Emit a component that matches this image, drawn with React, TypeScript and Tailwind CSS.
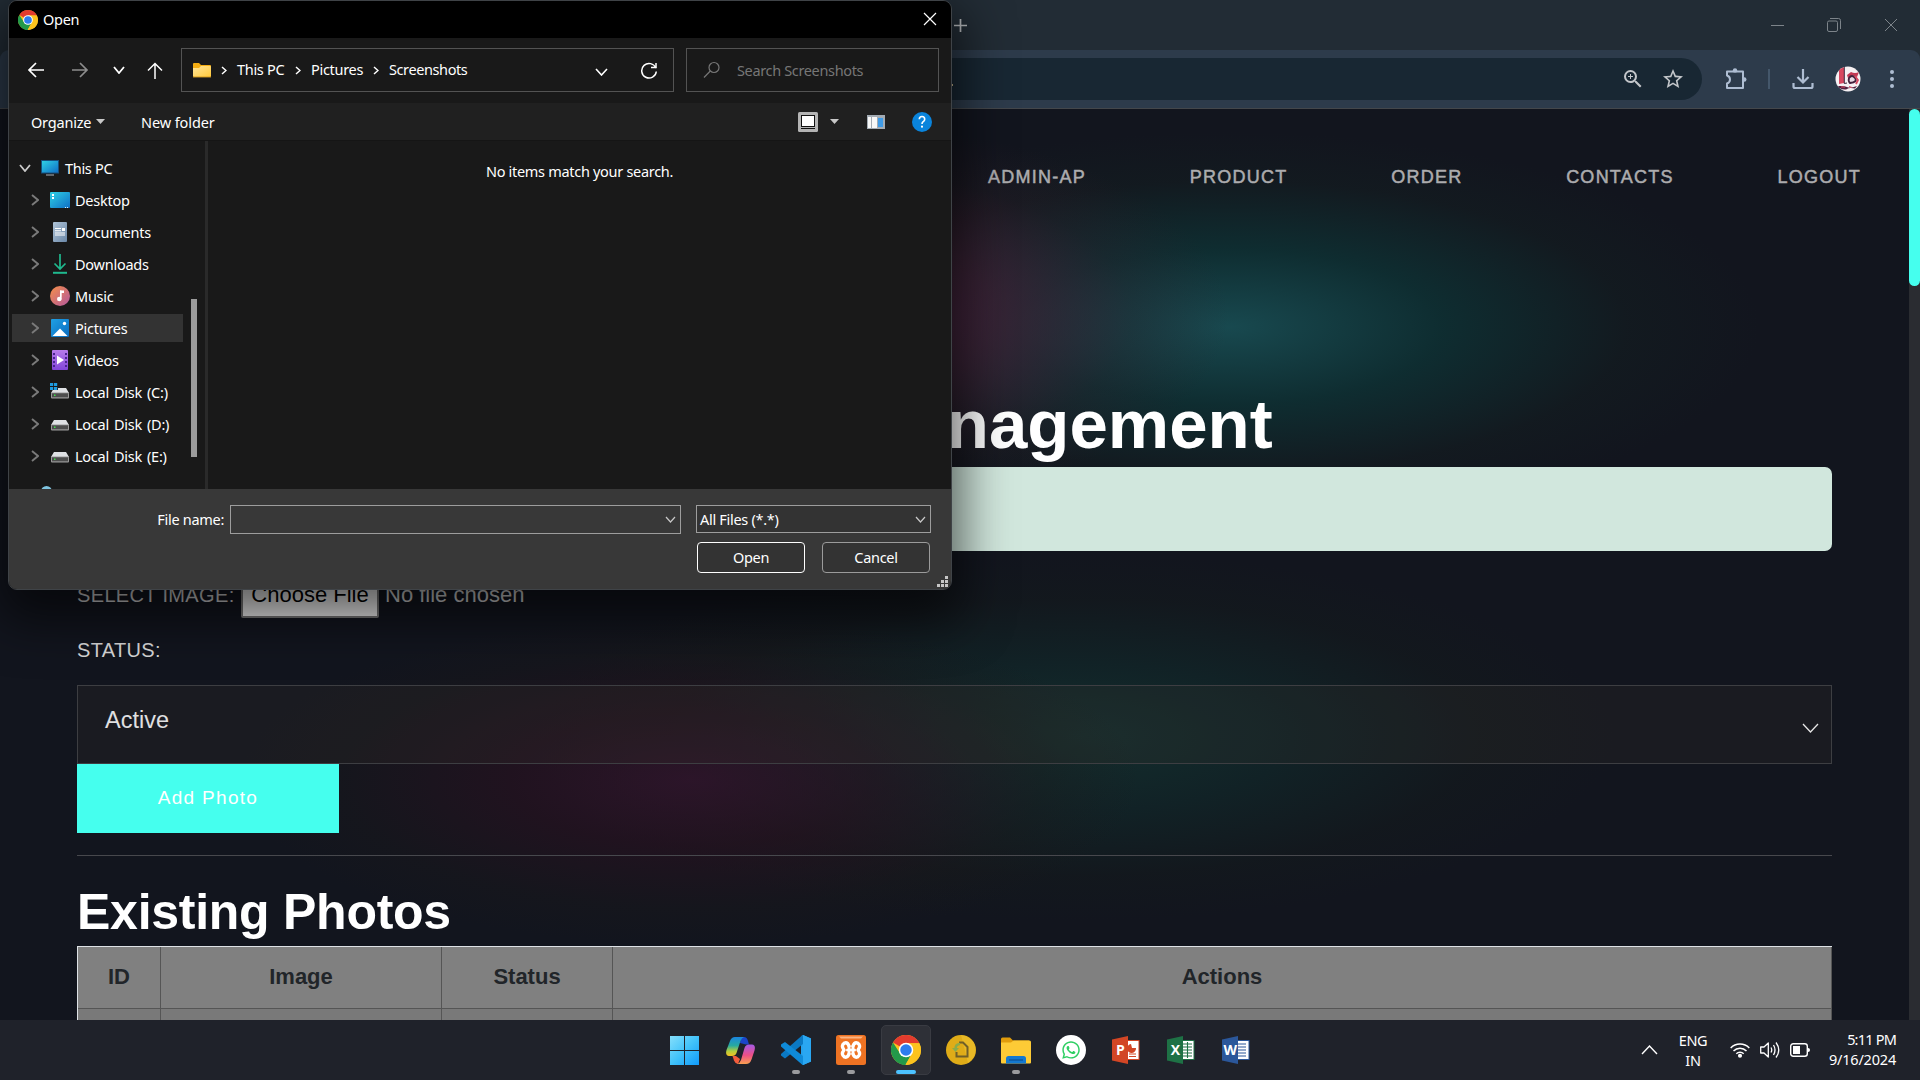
import React from 'react';
import { MdOutlineZoomIn, MdStarBorder } from 'react-icons/md';
import { FaWhatsapp } from 'react-icons/fa';

const ui = "font-['Noto_Sans','Open_Sans',sans-serif]";
const arial = "font-['Liberation_Sans',Arial,sans-serif]";

function ChromeLogo({ size }: { size: number }) {
  return (
    <svg width={size} height={size} viewBox="0 0 48 48" className="block shrink-0">
      <circle cx="24" cy="24" r="24" fill="#fcc31e" />
      <path d="M24 24 L3.2 12 A24 24 0 0 1 44.8 12 L45.3 13 H24 Z" fill="#e33b2e" />
      <path d="M3.2 12 L14.5 29.5 L24 34 L24 48 A24 24 0 0 1 3.2 12 Z" fill="#23994a" />
      <path d="M24 34 L33.500 29.500 L23 48 A24 24 0 0 1 17 46.900 Z" fill="#23994a" />
      <path d="M33.500 29.500 L23 48 A24 24 0 0 0 45.300 13 L24 13 L36 22Z" fill="#fcc31e" />
      <circle cx="24" cy="24" r="11.6" fill="#fff" />
      <circle cx="24" cy="24" r="9.2" fill="#2d7cee" />
    </svg>
  );
}

function Chevron({ w, h, color, stroke = 1.5, dir = 'down' }: { w: number; h: number; color: string; stroke?: number; dir?: 'down' | 'right' | 'up' }) {
  const d = dir === 'down' ? `M1 1 L${w / 2} ${h - 1} L${w - 1} 1` : dir === 'up' ? `M1 ${h - 1} L${w / 2} 1 L${w - 1} ${h - 1}` : `M1 1 L${w - 1} ${h / 2} L1 ${h - 1}`;
  return (
    <svg width={w} height={h} className="block shrink-0">
      <path d={d} fill="none" stroke={color} strokeWidth={stroke} />
    </svg>
  );
}

function FolderIcon() {
  return (
    <svg width="18" height="15" viewBox="0 0 18 15" className="block shrink-0">
      <defs>
        <linearGradient id="fold" x1="0" y1="0" x2="1" y2="1">
          <stop offset="0" stopColor="#ffe49a" />
          <stop offset="1" stopColor="#ffc93a" />
        </linearGradient>
      </defs>
      <path d="M0 1 Q0 0 1 0 H6 L8 2 H17 Q18 2 18 3 V8 H0Z" fill="#f5ad12" />
      <path d="M0 5 H6 L8 3 H17 Q18 3 18 4 V13 Q18 14 17 14 H1 Q0 14 0 13Z" fill="url(#fold)" />
      <rect x="0" y="13.4" width="18" height="1" fill="#e0a523" />
    </svg>
  );
}

function Triangle() {
  return (
    <svg width="9" height="5" className="block shrink-0">
      <path d="M0 0H9L4.5 5Z" fill="#c8c8c8" />
    </svg>
  );
}

function Disk({ win = false }: { win?: boolean }) {
  return (
    <svg width="20" height="20" viewBox="0 0 20 20" className="block overflow-visible">
      <path d="M4 6 H16 L19 11 H1Z" fill="#dfe1e4" />
      <rect x="1" y="10.5" width="18" height="6" rx="1" fill="#9b9b9b" />
      <rect x="2" y="11.3" width="16" height="4" fill="#4d4d4d" />
      <rect x="4" y="12.5" width="1.5" height="1.5" fill="#3fe04a" />
      {win && (
        <g>
          <rect x="0" y="0" width="8" height="8" fill="#191919" />
          <path d="M0 1h3.2v3H0zM4 1h3.2v3H4zM0 5h3.2v3H0zM4 5h3.2v3H4z" fill="#1e9be0" />
        </g>
      )}
    </svg>
  );
}

const treeIcons: Record<string, React.ReactNode> = {
  desktop: (
    <svg width="20" height="20" viewBox="0 0 20 20">
      <defs>
        <linearGradient id="dsk" x1="0" y1="0" x2="1" y2="1">
          <stop offset="0" stopColor="#2fd0e4" />
          <stop offset="1" stopColor="#0f6fc6" />
        </linearGradient>
      </defs>
      <rect x="0" y="2" width="20" height="16" rx="1" fill="url(#dsk)" />
      <path d="M2 4h2v2H2zM2 7h2v2H2z" fill="#fff" />
      <path d="M15 17h1v1h-1zM17 17h1v1h-1z" fill="#d8efff" />
    </svg>
  ),
  docs: (
    <svg width="20" height="20" viewBox="0 0 20 20">
      <defs>
        <linearGradient id="doc" x1="0" y1="0" x2="1" y2="1">
          <stop offset="0" stopColor="#b0c4d8" />
          <stop offset="1" stopColor="#6b88a8" />
        </linearGradient>
      </defs>
      <rect x="3" y="0" width="14" height="20" rx="1" fill="url(#doc)" />
      <path d="M5 6h6v1H5zM5 8.300h6v1H5zM5 10.400h10v1H5zM5 12.500h10v1H5zM12 6h3v3h-3z" fill="#fff" />
    </svg>
  ),
  down: (
    <svg width="20" height="20" viewBox="0 0 20 20" fill="none" stroke="#1fb98e" strokeWidth="1.700">
      <path d="M10 0V14.500M4.500 9.500L10 15L15.500 9.500" />
      <path d="M3 18.800H17" strokeWidth="2" />
    </svg>
  ),
  music: (
    <svg width="20" height="20" viewBox="0 0 20 20">
      <defs>
        <linearGradient id="mus" x1="0" y1="0" x2="1" y2="1">
          <stop offset="0.100" stopColor="#f08a50" />
          <stop offset="0.900" stopColor="#b85c96" />
        </linearGradient>
      </defs>
      <circle cx="10" cy="10" r="10" fill="url(#mus)" />
      <path d="M10 4.500H14V7H11.400V12.500" fill="#fff" />
      <circle cx="9.300" cy="13" r="2.300" fill="#fff" />
      <path d="M10 4.500h1.500v9H10z" fill="#fff" />
    </svg>
  ),
  pics: (
    <svg width="20" height="20" viewBox="0 0 20 20">
      <defs>
        <linearGradient id="pic" x1="0" y1="0" x2="1" y2="1">
          <stop offset="0" stopColor="#1fa0e4" />
          <stop offset="1" stopColor="#0b6cc0" />
        </linearGradient>
      </defs>
      <rect x="1" y="1" width="18" height="18" rx="1" fill="url(#pic)" />
      <path d="M2.500 18L10 10.500L17.500 18Z" fill="#fff" />
      <circle cx="14.500" cy="5.500" r="1.700" fill="#fff" />
    </svg>
  ),
  vids: (
    <svg width="20" height="20" viewBox="0 0 20 20">
      <defs>
        <linearGradient id="vid" x1="0" y1="0" x2="0" y2="1">
          <stop offset="0" stopColor="#b77bea" />
          <stop offset="1" stopColor="#8246d8" />
        </linearGradient>
      </defs>
      <rect x="2" y="0" width="16" height="20" rx="1" fill="url(#vid)" />
      <path d="M3 3h2v2H3zM3 7h2v2H3zM3 11h2v2H3zM3 15h2v2H3zM15 3h2v2h-2zM15 7h2v2h-2zM15 11h2v2h-2zM15 15h2v2h-2z" fill="#4a2391" />
      <path d="M7 5.500L14 10L7 14.500Z" fill="#fff" />
    </svg>
  ),
  c: <Disk win />,
  d: <Disk />,
};

const tree = [
  { label: 'Desktop', icon: 'desktop' },
  { label: 'Documents', icon: 'docs' },
  { label: 'Downloads', icon: 'down' },
  { label: 'Music', icon: 'music' },
  { label: 'Pictures', icon: 'pics', active: true },
  { label: 'Videos', icon: 'vids' },
  { label: 'Local Disk (C:)', icon: 'c' },
  { label: 'Local Disk (D:)', icon: 'd' },
  { label: 'Local Disk (E:)', icon: 'd' },
];

function FileDialog() {
  return (
    <div className={`${ui} absolute left-2 top-0 flex h-[590px] w-[944px] flex-col overflow-hidden rounded-[9px] border border-[#3f4347] bg-[#191919] text-[14.5px] leading-5 tracking-[-0.3px] text-white shadow-[0_20px_50px_10px_rgba(0,0,0,0.6)]`}>
      <div className="flex h-[37px] shrink-0 items-center bg-black pl-[9px] pr-[14px]">
        <ChromeLogo size={20} />
        <span className="mb-[2px] ml-[5px]">Open</span>
        <svg width="14" height="14" className="mb-[1px] ml-auto block">
          <path d="M1 1L13 13M13 1L1 13" stroke="#fff" strokeWidth="1.200" />
        </svg>
      </div>

      <div className="flex h-[65px] shrink-0 items-center pb-[1px] pl-[18px]">
        <svg width="18" height="16" fill="none" stroke="#fff" strokeWidth="1.700" className="block">
          <path d="M17 8H2M9 1L2 8L9 15" />
        </svg>
        <svg width="18" height="16" fill="none" stroke="#8d8d8d" strokeWidth="1.700" className="ml-[26px] block">
          <path d="M1 8H16M9 1L16 8L9 15" />
        </svg>
        <div className="ml-[24px]"><Chevron w={12} h={8} color="#fff" stroke={1.8} /></div>
        <svg width="16" height="17" fill="none" stroke="#fff" strokeWidth="1.500" className="ml-[22px] block">
          <path d="M8 17V1.500M1 8.500L8 1.500L15 8.500" />
        </svg>
        <div className="ml-[18px] flex h-11 w-[493px] items-center border border-[#535353] pl-[11px]">
          <FolderIcon />
          <div className="ml-[10px]"><Chevron w={6} h={9} color="#fff" stroke={1.5} dir="right" /></div>
          <span className="mb-[2px] ml-[10px] w-[58px]">This PC</span>
          <Chevron w={6} h={9} color="#fff" stroke={1.5} dir="right" />
          <span className="mb-[2px] ml-[10px] w-[62px]">Pictures</span>
          <Chevron w={6} h={9} color="#fff" stroke={1.5} dir="right" />
          <span className="mb-[2px] ml-[10px] tracking-[-0.400px]">Screenshots</span>
          <div className="ml-auto mt-[3px]"><Chevron w={13} h={8} color="#fff" stroke={1.6} /></div>
          <svg width="18" height="18" viewBox="0 0 18 18" fill="none" stroke="#fff" strokeWidth="1.500" className="ml-8 mr-[15px] mt-[2px] block">
            <path d="M15.800 6A7.300 7.300 0 1 0 16.300 9.500" />
            <path d="M11 5.500H16V1" />
          </svg>
        </div>
        <div className="ml-3 flex h-11 w-[253px] items-center border border-[#535353] pl-4 text-[#767676]">
          <svg width="18" height="18" viewBox="0 0 18 18" fill="none" stroke="#767676" strokeWidth="1.200" className="block">
            <circle cx="11" cy="6.500" r="5" />
            <path d="M7.300 10L1 16.500" />
          </svg>
          <span className="ml-[16px] tracking-[-0.350px]">Search Screenshots</span>
        </div>
      </div>

      <div className="flex h-[38px] shrink-0 items-center border-b border-[#151515] bg-[#202020] pl-[22px] pr-[19px]">
        <span className="w-[65px] tracking-[-0.200px]">Organize</span>
        <Triangle />
        <span className="ml-[36px] tracking-[-0.100px]">New folder</span>
        <svg width="20" height="20" className="ml-auto block">
          <rect width="20" height="20" rx="1.500" fill="#b4b4b4" />
          <rect x="3.500" y="3.500" width="13" height="11" fill="#fff" stroke="#111" />
          <path d="M3 16.500H17" stroke="#111" />
        </svg>
        <div className="ml-[12px]"><Triangle /></div>
        <svg width="18" height="14" className="ml-[28px] block">
          <rect width="18" height="14" fill="#a3abb3" />
          <rect x="1" y="2" width="9" height="11" fill="#f7f7f7" />
          <rect x="4" y="2" width="1" height="11" fill="#a3abb3" />
          <rect x="11" y="3" width="5" height="9" fill="#3f9be6" />
        </svg>
        <svg width="20" height="20" className="ml-[27px] block">
          <circle cx="10" cy="10" r="10" fill="#0a84dc" />
          <path d="M7.300 7.200Q7.300 4.500 10 4.500T12.700 7.200Q12.700 8.600 11.200 9.600Q10 10.500 10 12" fill="none" stroke="#fff" strokeWidth="1.600" />
          <circle cx="10" cy="14.700" r="1.100" fill="#fff" />
        </svg>
      </div>

      <div className="flex min-h-0 flex-1">
        <div className="flex w-[196px] shrink-0 justify-between overflow-hidden pl-[3px] pr-[8px]">
          <div className="w-[171px] pt-[11px]">
            <div className="flex h-8 items-center pl-[7px]">
              <Chevron w={12} h={8} color="#c9c9c9" stroke={1.8} />
              <svg width="18" height="16" viewBox="0 0 18 16" className="ml-[10px] block">
                <rect width="18" height="13.500" fill="#164f7e" />
                <rect x="1" y="1" width="16" height="11.500" fill="url(#dsk)" />
                <path d="M5 14.500h8v1H5z" fill="#aab4bd" />
              </svg>
              <span className="ml-[6px]">This PC</span>
            </div>
            {tree.map((t) => (
              <div key={t.label} className="flex h-8 items-center">
                <div className={`flex h-7 w-full items-center pl-[19px] ${t.active ? 'bg-[#333333]' : ''}`}>
                  <Chevron w={8} h={12} color="#7a7a7a" stroke={1.9} dir="right" />
                  <div className="ml-[11px]">{treeIcons[t.icon]}</div>
                  <span className="ml-[5px] whitespace-nowrap tracking-[-0.250px] [word-spacing:1.500px]">{t.label}</span>
                </div>
              </div>
            ))}
            <div className="flex justify-start pl-[29px] pt-[14px]">
              <div className="size-[11px] rounded-full bg-[#7fc4e0]" />
            </div>
          </div>
          <div className="mt-[158px] h-[158px] w-[6px] bg-[#9b9b9b]" />
        </div>
        <div className="w-[3px] bg-[#2a2a2a]" />
        <div className="flex-1 pt-[20px] text-center">No items match your search.</div>
      </div>

      <div className="relative h-[100px] shrink-0 bg-[#383838] pt-[16px]">
        <div className="flex items-start">
          <span className="w-[215px] pt-[4px] text-right">File name:</span>
          <div className="ml-[6px] flex h-[29px] w-[451px] items-center justify-end border border-[#9d9d9d] pr-[4px]">
            <Chevron w={11} h={7} color="#c8c8c8" stroke={1.2} />
          </div>
          <div className="ml-[15px] flex h-[28px] w-[235px] items-center justify-between border border-[#9d9d9d] bg-[#333333] pl-[3px] pr-[4px]">
            <span>All Files (*.*)</span>
            <Chevron w={11} h={7} color="#c8c8c8" stroke={1.2} />
          </div>
        </div>
        <div className="mt-[8px] flex justify-end gap-[17px] pr-[21px]">
          <div className="flex h-[31px] w-[108px] items-center justify-center rounded-[4px] border border-white bg-[#333333] pb-[1px]">Open</div>
          <div className="flex h-[31px] w-[108px] items-center justify-center rounded-[4px] border border-[#9b9b9b] bg-[#333333] pb-[1px]">Cancel</div>
        </div>
        <svg width="11" height="11" className="absolute bottom-[2px] right-[3px]">
          <path d="M8 0h3v3H8zM4 4h3v3H4zM8 4h3v3H8zM0 8h3v3H0zM4 8h3v3H4zM8 8h3v3H8z" fill="#c6c6c6" />
        </svg>
      </div>
    </div>
  );
}

function BrowserChrome() {
  return (
    <header className="shrink-0 bg-[#222c35]">
      <div className="flex h-[50px] items-center pl-[954px] pr-[22px]">
        <svg width="13" height="13" className="mt-[1px] block">
          <path d="M6.500 0V13M0 6.500H13" stroke="#b9bcbf" strokeWidth="1.700" />
        </svg>
        <svg width="13" height="14" className="ml-auto block">
          <path d="M0 7.500H13" stroke="#7d848a" />
        </svg>
        <svg width="14" height="14" fill="none" stroke="#7d848a" className="ml-[43px] block">
          <rect x="0.500" y="3" width="10" height="10.500" rx="1.500" />
          <path d="M3 0.500H11.500Q13.500 0.500 13.500 2.500V11" />
        </svg>
        <svg width="14" height="14" className="ml-[43px] block">
          <path d="M1 1L13 13M13 1L1 13" stroke="#7d848a" />
        </svg>
      </div>
      <div className="flex h-[59px] items-center rounded-t-[9px] border-b border-[#44474b] bg-[#2d3b4b] pr-[26px]">
        <div className="ml-[140px] flex h-[42px] flex-1 items-center justify-end gap-[16px] rounded-full bg-[#182733] pr-[17px] text-[#c3c6ca]">
          <span className="mr-auto h-[2px] w-[2px] translate-x-[811px] translate-y-[6px] bg-[#c9b58a]" />
          <MdOutlineZoomIn size={24} />
          <MdStarBorder size={24} />
        </div>
        <svg width="22" height="22" viewBox="0 0 22 22" fill="none" stroke="#aebdd2" strokeWidth="2" className="ml-[23px] mr-px block">
          <path d="M2 3.500H18V20H2V15.500Q5 14.500 5 11.500T2 7.500Z" strokeLinejoin="round" />
          <circle cx="10" cy="2.400" r="2.200" fill="#aebdd2" stroke="none" />
          <circle cx="19.300" cy="11.500" r="2.200" fill="#aebdd2" stroke="none" />
        </svg>
        <div className="ml-[20px] h-5 w-[2px] bg-[#44576b]" />
        <svg width="22" height="22" viewBox="0 0 22 22" fill="none" stroke="#aebdd2" strokeWidth="2.200" className="ml-[22px] block">
          <path d="M11 1V14M5.500 9L11 14.500L16.500 9M1.500 15V18.500Q1.500 20 3 20H19Q20.500 20 20.500 18.500V15" />
        </svg>
        <svg width="26" height="26" viewBox="0 0 26 26" className="ml-[21px] block">
          <defs>
            <clipPath id="av"><circle cx="13" cy="13" r="12.500" /></clipPath>
          </defs>
          <g clipPath="url(#av)">
            <rect width="26" height="26" fill="#f6f0f3" />
            <path d="M4 2L9 0V17L4 18Z" fill="#d8475f" />
            <path d="M9.300 1V17.500L12 17" fill="none" stroke="#3a2238" strokeWidth="1" />
            <path d="M12 9L16 6Q20 8 24 6L22 11L18 9.500L13 12Z" fill="#c33a55" />
            <path d="M14 12Q17 8 20 12T15 17Q13 15 14 12Z" fill="#e9dbe4" stroke="#43203c" strokeWidth="1.800" />
            <path d="M20 10L23 14L21 18" fill="none" stroke="#d8475f" strokeWidth="1.800" />
            <path d="M3 20Q9 19.500 12 21T22 20L20 22.500Q14 21.500 12 23T4 22Z" fill="#542040" />
            <path d="M6 21H10M14 20.500L17 21.500" stroke="#d8475f" strokeWidth="1" />
          </g>
        </svg>
        <svg width="4" height="18" className="ml-[29px] block">
          <circle cx="2" cy="2" r="2" fill="#aebdd2" />
          <circle cx="2" cy="9" r="2" fill="#aebdd2" />
          <circle cx="2" cy="16" r="2" fill="#aebdd2" />
        </svg>
      </div>
    </header>
  );
}

function WebPage() {
  return (
    <main className={`${arial} flex min-h-0 flex-1 bg-[#12151e]`}>
      <div className="min-w-0 flex-1 overflow-hidden bg-[radial-gradient(390px_190px_at_840px_206px,rgba(90,30,68,0.85),rgba(84,30,58,0.55)_40%,rgba(60,30,46,0.2)_75%,transparent),radial-gradient(530px_195px_at_1230px_218px,rgba(25,80,86,0.88),rgba(12,62,62,0.58)_40%,rgba(20,38,36,0.28)_75%,transparent),radial-gradient(450px_165px_at_690px_671px,rgba(50,20,44,0.8),rgba(46,16,32,0.5)_40%,rgba(28,24,26,0.3)_78%,transparent),radial-gradient(540px_185px_at_1075px_628px,rgba(20,56,52,0.7),rgba(16,50,48,0.45)_40%,rgba(20,30,28,0.3)_75%,transparent)] pl-[77px] pr-[77px]">
        <nav className="-mr-[29px] flex h-[135px] items-center justify-end gap-[103.700px] pt-[2px] text-[18px] tracking-[1.250px] text-[#acacae] [-webkit-text-stroke:0.5px_#acacae]">
          <span>ADMIN-AP</span>
          <span>PRODUCT</span>
          <span>ORDER</span>
          <span>CONTACTS</span>
          <span>LOGOUT</span>
        </nav>
        <h1 className="mt-[141px] text-center text-[69px] font-bold leading-[80px] text-white">Photo Management</h1>
        <div className="mt-[2px] h-[84px] rounded-[7px] bg-[#d1e7dd]" />
        <div className="mt-[19px] flex h-[48px] items-center text-[20px] text-[#cfcfd0]">
          <span className="w-[164px] pt-px tracking-[0.350px]">SELECT IMAGE:</span>
          <span className="flex h-[48px] w-[138px] items-center justify-center rounded-[2px] border-2 border-[#767676] bg-[#efefef] text-[22px] text-black">Choose File</span>
          <span className="ml-[6px] text-[22px]">No file chosen</span>
        </div>
        <div className="mt-[20px] h-[47px] text-[20px] leading-[25px] tracking-[0.350px] text-[#d8d8d9]">STATUS:</div>
        <div className="flex h-[79px] items-center justify-between border border-[#3d3e42] bg-[rgba(50,48,42,0.25)] pl-[27px] pr-[12px]">
          <span className="pb-[9px] text-[23.5px] leading-7 text-[#e0e0e1]">Active</span>
          <div className="mt-[6px]"><Chevron w={17} h={10} color="#e6e6e6" stroke={1.3} /></div>
        </div>
        <div className="flex h-[69px] w-[262px] items-center justify-center bg-[#45ffee] text-[19px] tracking-[1.300px] text-white">Add Photo</div>
        <div className="mt-[22px] h-px bg-[#47484d]" />
        <h2 className="mt-[26px] h-[64px] text-[50px] font-bold leading-[60px] tracking-[-0.260px] text-white">Existing Photos</h2>
        <div className="border-l border-t border-[#dee2e6] bg-[#808080]">
          <div className="grid h-[62px] grid-cols-[83px_281px_171px_1fr] border-b border-[#555555] text-[22px] font-bold text-[#212529]">
            <div className="border-r border-[#555555] pt-[14px] text-center leading-[32px]">ID</div>
            <div className="border-r border-[#555555] pt-[14px] text-center leading-[32px]">Image</div>
            <div className="border-r border-[#555555] pt-[14px] text-center leading-[32px]">Status</div>
            <div className="border-r border-[#555555] pt-[14px] text-center leading-[32px]">Actions</div>
          </div>
          <div className="grid h-[40px] grid-cols-[83px_281px_171px_1fr] bg-[#797979]">
            <div className="border-r border-[#555555]" />
            <div className="border-r border-[#555555]" />
            <div className="border-r border-[#555555]" />
            <div className="border-r border-[#555555]" />
          </div>
        </div>
      </div>
      <div className="w-[11px] shrink-0 bg-[#2a2c31]">
        <div className="h-[177px] rounded-full bg-[#45ffee]" />
      </div>
    </main>
  );
}

function OfficeIcon({ letter, dark, light, children }: { letter: string; dark: string; light: string; children: React.ReactNode }) {
  return (
    <svg width="28" height="28" viewBox="0 0 28 28" className="block">
      <rect x="13" y="4" width="14.500" height="20" fill={light} />
      <rect x="13" y="5" width="13.500" height="18" fill="#fff" />
      {children}
      <path d="M0 3.500L16 0V28L0 24.500Z" fill={dark} />
      <text x="8.300" y="19" textAnchor="middle" fontFamily="Open Sans, sans-serif" fontWeight="700" fontSize="14" fill="#fff">{letter}</text>
    </svg>
  );
}

function TaskSlot({ children, run }: { children: React.ReactNode; run?: boolean }) {
  return (
    <div className="relative flex h-[60px] w-[55px] items-center justify-center">
      {children}
      {run && <span className="absolute bottom-[6px] left-[24px] h-1 w-2 rounded-full bg-[#9a9b9e]" />}
    </div>
  );
}

function Taskbar() {
  return (
    <footer className={`${ui} flex h-[60px] shrink-0 items-center bg-[#1f222a] text-white`}>
      <div className="w-[658px]" />
      <div className="flex">
        <TaskSlot>
          <svg width="29" height="29" className="mr-[2px]">
            <defs>
              <linearGradient id="wn" gradientUnits="userSpaceOnUse" x1="0" y1="0" x2="29" y2="29">
                <stop offset="0" stopColor="#85dffb" />
                <stop offset="0.500" stopColor="#42c3fa" />
                <stop offset="1" stopColor="#109afb" />
              </linearGradient>
            </defs>
            <path d="M0 0h14v14H0zM15 0h14v14H15zM0 15h14v14H0zM15 15h14v14H15z" fill="url(#wn)" />
          </svg>
        </TaskSlot>
        <TaskSlot>
          <svg width="29" height="27" viewBox="0 0 29 27">
            <defs>
              <linearGradient id="cp1" x1="0" y1="0" x2="0" y2="1">
                <stop offset="0" stopColor="#1a86e0" />
                <stop offset="0.450" stopColor="#27a9a0" />
                <stop offset="0.750" stopColor="#b5cf3c" />
                <stop offset="1" stopColor="#f5bf22" />
              </linearGradient>
              <linearGradient id="cp2" x1="0" y1="0" x2="0" y2="1">
                <stop offset="0" stopColor="#a45ae6" />
                <stop offset="0.550" stopColor="#ee4f86" />
                <stop offset="1" stopColor="#f8a050" />
              </linearGradient>
            </defs>
            <path d="M6.500 19H10L14 22L12 27Q9 26.500 8 23.500Z" fill="#f25c3c" />
            <path d="M15 0H18Q21 0 22 4L23 7.500H20L14 6Z" fill="#1b45c8" />
            <path d="M9 0H18Q15.500 1 14.500 4L10.500 16Q9.500 19 6 19H3Q-1 18.500 0.500 13L4 4Q5.500 0 9 0Z" fill="url(#cp1)" />
            <path d="M20 27H11Q14 26 15 23L18.500 11Q19.500 7.500 23 7.500H26Q30 8 28.500 13.500L25.500 22.500Q24 27 20 27Z" fill="url(#cp2)" />
          </svg>
        </TaskSlot>
        <TaskSlot run>
          <svg width="30" height="30" viewBox="0 0 30 30">
            <path d="M22 0L30 3.500V26.500L22 30L20 28V2Z" fill="#26a3ee" />
            <path d="M22 0V9L4 23.500L0 20.500V19L21 0.500Z" fill="#0b79c4" />
            <path d="M22 30V21L4 7L0 9.500V11.500L21 29.500Z" fill="#0f8ad8" />
            <path d="M22 0L30 3.500V26.500L22 30Z" fill="#2aa7f2" />
          </svg>
        </TaskSlot>
        <TaskSlot run>
          <svg width="30" height="30" viewBox="0 0 30 30">
            <rect width="30" height="30" rx="2.500" fill="#ee7323" />
            <path d="M3 1.500H27L25 3.500H5Z" fill="#f9b483" />
            <g fill="none" stroke="#fff" strokeWidth="3.400" strokeLinecap="round" strokeLinejoin="round">
              <path d="M13 11Q11.500 7 8.500 8Q4.500 10.500 8 15Q4.500 19.500 8.500 22Q11.500 23 13 19" />
              <path d="M17 11Q18.500 7 21.500 8Q25.500 10.500 22 15Q25.500 19.500 21.500 22Q18.500 23 17 19" />
              <path d="M11.500 15H18.500M13 11V12.500M17 11V12.500M13 17.500V19M17 17.500V19" strokeWidth="3" />
            </g>
          </svg>
        </TaskSlot>
        <div className="relative flex h-[60px] w-[55px] items-center justify-center">
          <div className="flex size-[50px] items-center justify-center rounded-[5px] border border-[#393b42] bg-[#2e3037]">
            <ChromeLogo size={30} />
          </div>
          <span className="absolute bottom-[6px] left-[18px] h-1 w-5 rounded-full bg-[#4cc2ff]" />
        </div>
        <TaskSlot>
          <svg width="30" height="30" viewBox="0 0 30 30">
            <circle cx="15" cy="15" r="15" fill="#dfac18" />
            <path d="M15 0A15 15 0 0 1 22 28Z" fill="#eec231" opacity="0.600" />
            <path d="M13 7.500H17L21.500 12V21.500H10.500V17" fill="none" stroke="#6f5f28" strokeWidth="2" />
            <path d="M14 9Q9.500 9 9.500 14" fill="none" stroke="#8aac4a" strokeWidth="2.500" />
            <path d="M6 13H13L9.500 17Z" fill="#8aac4a" />
          </svg>
        </TaskSlot>
        <TaskSlot run>
          <svg width="30" height="27" viewBox="0 0 30 27" className="block">
            <path d="M0 2Q0 0.500 1.500 0.500H9L12 3.500H28V9H0Z" fill="#e09c0c" />
            <path d="M0 5.500H10L12.500 3.500H28.500Q30 3.500 30 5V25.500Q30 26.500 29 26.500H1Q0 26.500 0 25.500Z" fill="#fdcb36" />
            <path d="M5 26.500V21.500Q5 19 7.500 19H22.500Q25 19 25 21.500V26.500Z" fill="#1479d0" />
            <path d="M8 23H22" stroke="#0c4f94" strokeWidth="1.200" />
          </svg>
        </TaskSlot>
        <TaskSlot>
          <div className="flex size-[30px] items-center justify-center rounded-full bg-white text-[#2fcf63]">
            <FaWhatsapp size={20} />
          </div>
        </TaskSlot>
        <TaskSlot>
          <OfficeIcon letter="P" dark="#d24625" light="#d24625">
            <path d="M19 8A4.500 4.500 0 1 0 24 12H20Z" fill="#d24625" />
            <path d="M17 18H24M17 20.500H24" stroke="#d24625" />
          </OfficeIcon>
        </TaskSlot>
        <TaskSlot>
          <OfficeIcon letter="X" dark="#1e7145" light="#1e7145">
            <path d="M16 8H25M16 11H25M16 14H25M16 17H25M16 20H25M20.500 6V22" stroke="#1e7145" strokeWidth="1.100" />
          </OfficeIcon>
        </TaskSlot>
        <TaskSlot>
          <OfficeIcon letter="W" dark="#2b579a" light="#2b579a">
            <path d="M16 8H24M16 11H24M16 14H24M16 17H24M16 20H24" stroke="#2b579a" strokeWidth="1.200" />
          </OfficeIcon>
        </TaskSlot>
      </div>
      <div className="flex flex-1 items-center justify-end pr-6 text-[14.5px] leading-5 tracking-[-0.3px]">
        <Chevron w={17} h={10} color="#fff" stroke={1.4} dir="up" />
        <div className="ml-[20px] w-[30px] text-center">ENG<br />IN</div>
        <svg width="20" height="16" viewBox="0 0 20 16" fill="none" stroke="#fff" strokeWidth="1.500" className="ml-[22px] block">
          <path d="M0.700 6A13 13 0 0 1 19.300 6M3.500 9A9 9 0 0 1 16.500 9M6.300 11.800A5.300 5.300 0 0 1 13.700 11.800" />
          <circle cx="10" cy="13.700" r="1.300" fill="#fff" />
        </svg>
        <svg width="20" height="18" viewBox="0 0 20 18" fill="none" stroke="#fff" strokeWidth="1.300" className="ml-[10px] block">
          <path d="M0.700 6H4L8.300 2V16L4 12H0.700Z" strokeLinejoin="round" />
          <path d="M11 6.500Q12.500 9 11 11.500M13.500 4Q16.500 9 13.500 14M16 1.500Q21.500 9 16 16.500" />
        </svg>
        <svg width="20" height="14" viewBox="0 0 20 14" className="ml-[10px] block">
          <rect x="0.700" y="0.700" width="16.600" height="12.600" rx="2.500" fill="none" stroke="#fff" strokeWidth="1.400" />
          <rect x="3" y="3" width="7" height="8" fill="#fff" />
          <path d="M18 5Q20 5 20 7T18 9Z" fill="#fff" />
        </svg>
        <div className="mb-[2px] ml-[18px] w-[68px] text-right">
          <span className="tracking-[-0.800px]">5:11 PM</span>
          <br />
          <span className="tracking-[-0.200px]">9/16/2024</span>
        </div>
      </div>
    </footer>
  );
}

export default function App() {
  return (
    <div className="relative flex h-[1080px] w-[1920px] flex-col overflow-hidden bg-[#12151e]">
      <BrowserChrome />
      <WebPage />
      <FileDialog />
      <Taskbar />
    </div>
  );
}
